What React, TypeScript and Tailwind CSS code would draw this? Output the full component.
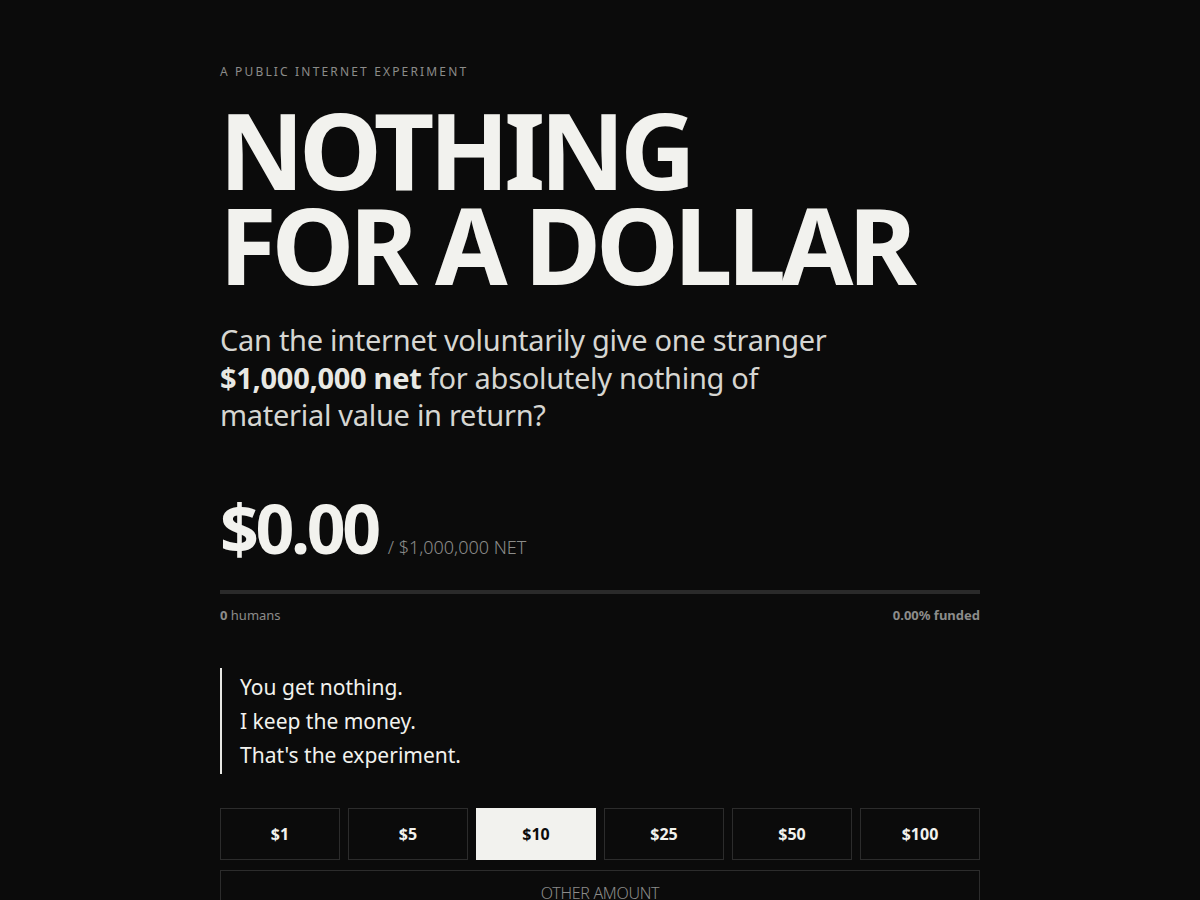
import { useState } from "react";

const amounts = [1, 5, 10, 25, 50, 100];

const App = () => {
  const [selected, setSelected] = useState(10);

  return (
    <div
      className="min-h-screen bg-[#0b0b0b] text-[#f2f2ee]"
      style={{ fontFamily: '"Noto Sans", "Open Sans", sans-serif' }}
    >
      <main className="mx-auto w-[760px] pt-[64px]">
        <p className="text-[12px] uppercase leading-4 tracking-[0.18em] text-[#8c8c8a]">
          A public internet experiment
        </p>

        <h1 className="mt-[23px] -ml-[1px] text-[105px] font-bold uppercase leading-[0.9] tracking-[-0.05em] text-[#f2f2ee]">
          Nothing
          <br />
          for a dollar
        </h1>

        <p className="mt-[29px] max-w-[640px] text-[29px] leading-[37.5px] tracking-[-0.01em] text-[#d6d6d2]">
          Can the internet voluntarily give one stranger{" "}
          <strong className="font-bold text-[#e8e8e4]">$1,000,000 net</strong>{" "}
          for absolutely nothing of material value in return?
        </p>

        {/* 진행 상황 */}
        <div className="mt-[60px] flex items-baseline gap-[10px]">
          <span className="text-[68px] font-bold leading-none tracking-[-0.05em]">
            $0.00
          </span>
          <span className="text-[18px] font-light uppercase text-[#8c8c8a]">
            / $1,000,000 net
          </span>
        </div>

        <div className="mt-[28px] h-[4px] w-full bg-[#2a2a2a]" />

        <div className="mt-[12px] flex justify-between text-[13px] text-[#8c8c8a]">
          <span>
            <span className="font-bold">0</span> humans
          </span>
          <span className="font-bold">0.00% funded</span>
        </div>

        <blockquote className="mt-[43px] border-l-2 border-[#e8e8e4] py-[2px] pl-[18px] text-[21px] leading-[34px] text-[#f2f2ee]">
          <p>You get nothing.</p>
          <p>I keep the money.</p>
          <p>That's the experiment.</p>
        </blockquote>

        <div className="mt-[34px] grid grid-cols-6 gap-[8px]">
          {amounts.map((a) => (
            <button
              key={a}
              type="button"
              onClick={() => setSelected(a)}
              className={
                a === selected
                  ? "h-[52px] border border-[#f2f2ee] bg-[#f2f2ee] text-[16px] font-bold text-[#0b0b0b]"
                  : "h-[52px] border border-[#2c2c2c] bg-transparent text-[16px] font-bold text-[#f2f2ee]"
              }
            >
              ${a}
            </button>
          ))}
        </div>

        <button
          type="button"
          className="mt-[10px] w-full border border-[#2c2c2c] py-[10px] text-[16px] font-light uppercase leading-6 tracking-[-0.02em] text-[#8c8c8a]"
        >
          Other amount
        </button>
      </main>
    </div>
  );
};

export default App;
